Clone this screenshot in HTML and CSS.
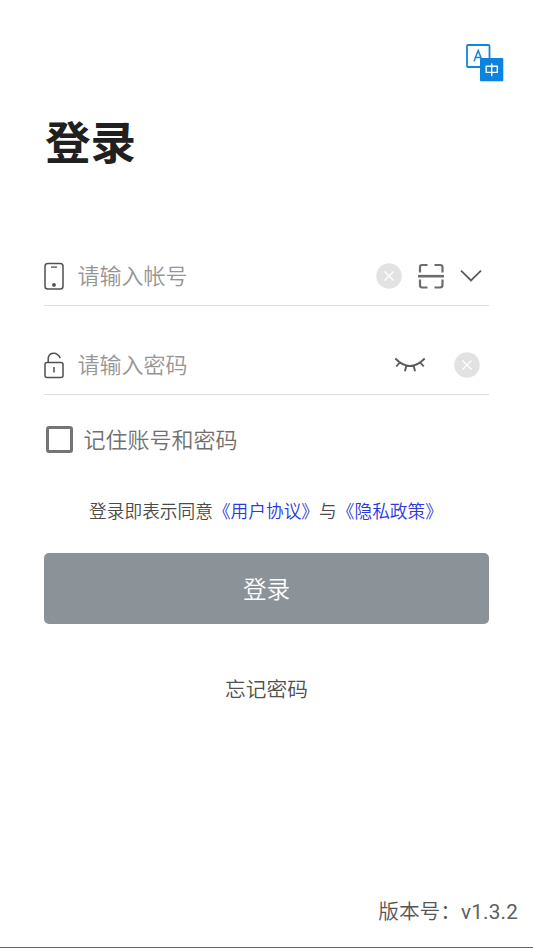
FILE: index.html
```html
<!DOCTYPE html>
<html lang="zh-CN">
<head>
<meta charset="utf-8">
<title>登录</title>
<link rel="stylesheet" href="styles.css">
</head>
<body>
<main class="screen">
  <header class="topbar">
    <svg class="lang" viewBox="0 0 38 38" width="38" height="38" role="img" aria-label="语言">
      <rect x="1" y="1" width="22.5" height="22" rx="1" fill="#fff" stroke="#1286df" stroke-width="1.8"/>
      <path d="M8 17.2L12.2 6.5L16.4 17.2M9.5 13.6H15" fill="none" stroke="#1286df" stroke-width="1.5"/>
      <rect x="14" y="14" width="23.3" height="23.3" rx="1" fill="#0c83df"/>
      <path d="M20.2 22.3H31.3V28.4H20.2ZM25.7 19.6V32.3" fill="none" stroke="#fff" stroke-width="1.4"/>
    </svg>
  </header>
  <h1 class="title">登录</h1>

  <div class="field">
    <svg class="lead" viewBox="0 0 20 28" width="20" height="28">
      <rect x="1" y="1.5" width="18" height="25.5" rx="2.8" fill="none" stroke="#505050" stroke-width="1.5"/>
      <path d="M7 5.1H13" stroke="#505050" stroke-width="1.3"/><circle cx="10" cy="22.9" r="1.9" fill="#505050"/>
    </svg>
    <span class="placeholder">请输入帐号</span>
    <svg class="clear" viewBox="0 0 26 26" width="26" height="26"><circle cx="13" cy="13" r="12.7" fill="#e2e2e2"/><path d="M8.5 8.5L17.5 17.5M17.5 8.5L8.5 17.5" stroke="#fff" stroke-width="1.4"/></svg>
    <svg class="scan" viewBox="0 0 28 28" width="28" height="28" fill="none" stroke="#6c6c6c" stroke-width="2.2">
      <path d="M3 10.5V5Q3 3 5 3H10.5M17.5 3H23Q25.5 3 25.5 5V10.5M25.5 17.5V23Q25.5 25.5 23 25.5H17.5M10.5 25.5H5Q3 25.5 3 23V17.5"/><path d="M1 14.2H27" stroke-width="2.6"/>
    </svg>
    <svg class="chevron" viewBox="0 0 22 14" width="22" height="14"><path d="M1 1.7L11 11.5L21 1.7" fill="none" stroke="#5c5c5c" stroke-width="1.8"/></svg>
  </div>

  <div class="field field-password">
    <svg class="lead" viewBox="0 0 20 28" width="20" height="28" fill="none" stroke="#505050" stroke-width="1.5">
      <rect x="1" y="11.5" width="18" height="15" rx="2"/><path d="M4.2 11.5V8.5C4.2 0.4 13.2 0.1 16.3 7.2M10 16V21.5"/>
    </svg>
    <span class="placeholder">请输入密码</span>
    <svg class="eye" viewBox="0 0 32 18" width="32" height="18" fill="none" stroke="#5c5c5c" stroke-width="1.9"><path d="M1.3 2.5Q16 17.5 30.7 2.5M5.7 6.5L2.3 10.5M26.3 6.5L29.7 10.5M12.3 9.8L11 15.2M19.7 9.8L21 15.2"/></svg>
    <svg class="clear" viewBox="0 0 26 26" width="26" height="26"><circle cx="13" cy="13" r="12.7" fill="#e2e2e2"/><path d="M8.5 8.5L17.5 17.5M17.5 8.5L8.5 17.5" stroke="#fff" stroke-width="1.4"/></svg>
  </div>

  <div class="remember"><span class="checkbox"></span><span class="remember-label">记住账号和密码</span></div>
  <p class="agreement">登录即表示同意<a>《用户协议》</a>与<a>《隐私政策》</a></p>
  <button class="submit">登录</button>
  <a class="forgot">忘记密码</a>
  <footer class="version">版本号：<span class="number">v1.3.2</span></footer>
</main>
</body>
</html>
```
FILE: styles.css
```css
* { box-sizing: border-box; }
body {
  margin: 0;
  background: #fff;
  font-family: "Noto Sans CJK SC", sans-serif;
  font-weight: 350;
}
.screen {
  display: flex;
  flex-direction: column;
  height: 948px;
  padding: 43px 44px 0;
  border-bottom: 1px solid #626262;
  overflow: hidden;
}
svg { display: block; flex: none; }
.topbar { display: flex; justify-content: flex-end; height: 39px; margin-right: -15px; }
.lang { margin-top: 1px; }
.title {
  margin: 28px 0 0 1px;
  height: 60px;
  line-height: 60px;
  font-size: 45.5px;
  font-weight: 700;
  color: #202020;
}
.field {
  display: flex;
  align-items: center;
  height: 60px;
  margin-top: 76px;
  width: 445px;
  border-bottom: 1px solid #dedede;
}
.field-password { margin-top: 29px; }
.placeholder {
  margin-left: 13.5px;
  padding-bottom: 3px;
  font-size: 22px;
  line-height: 32px;
  color: #959595;
  flex: 1;
}
.scan { margin-left: 15px; }
.chevron { margin: 0 7px 0 15px; }
.eye { margin-right: 28px; }
.field-password .clear { margin-right: 9px; }
.remember {
  display: flex;
  align-items: center;
  height: 32px;
  margin: 28px 0 0 2px;
  gap: 10.5px;
  font-size: 22px;
  line-height: 32px;
  color: #707070;
}
.remember-label { padding-bottom: 2px; }
.checkbox { width: 27px; height: 27px; border: 3px solid #757575; border-radius: 3px; }
.agreement {
  margin: 41px 0 0;
  height: 28px;
  line-height: 28px;
  padding-right: 1px;
  text-align: center;
  font-size: 17.7px;
  color: #4a4a4a;
  white-space: nowrap;
}
.agreement a { color: #2d39dd; }
.submit {
  width: 445px;
  height: 71px;
  margin-top: 29px;
  padding: 0;
  border: 0;
  border-radius: 5px;
  background: #8b9399;
  color: #fff;
  font: 350 23.6px/71px "Noto Sans CJK SC", sans-serif;
}
.forgot {
  align-self: center;
  margin-top: 48px;
  font-size: 20.7px;
  line-height: 32px;
  color: #505050;
}
.version {
  margin: auto -29px 19px 0;
  text-align: right;
  font-size: 20.7px;
  line-height: 32px;
  color: #555;
}
.number { font-family: Roboto, sans-serif; font-weight: 400; color: #606060; letter-spacing: 0.2px; }
```
